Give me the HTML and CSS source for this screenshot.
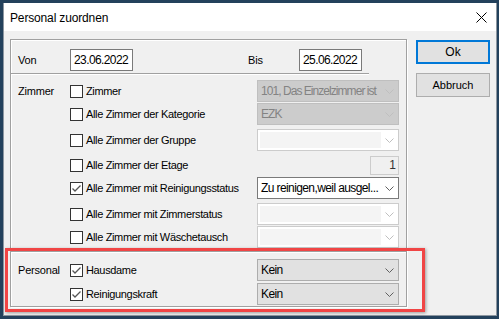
FILE: index.html
```html
<!DOCTYPE html>
<html lang="de">

<head>
    <meta charset="UTF-8">
    <title>Personal zuordnen</title>
    <link rel="stylesheet" href="styles.css">
</head>

<body>
    <div class="window">
        <div class="titlebar">
            <span class="title">Personal zuordnen</span>
            <svg class="close" width="11" height="11" viewBox="0 0 11 11">
                <path d="M0.5 0.5 L10.5 10.5 M10.5 0.5 L0.5 10.5" stroke="#000" stroke-width="1" fill="none" />
            </svg>
        </div>

        <div class="client">
            <div class="group">
                <div class="dates">
                    <span class="lbl">Von</span>
                    <div class="cell"><div class="datebox">23.06.2022</div></div>
                    <span class="lbl">Bis</span>
                    <div class="datebox">25.06.2022</div>
                </div>
                <div class="sep short"></div>

                <div class="rows zimmer">
                    <span class="lbl">Zimmer</span>
                    <label class="check"><span class="box"></span>Zimmer</label>
                    <div class="combo off"><span class="combo-text">101, Das Einzelzimmer ist</span><span class="arrow"><svg width="9" height="5" viewBox="0 0 9 5"><path d="M0.5 0.5 L4.5 4.5 L8.5 0.5" /></svg></span></div>

                    <span></span>
                    <label class="check"><span class="box"></span>Alle Zimmer der Kategorie</label>
                    <div class="combo off"><span class="combo-text">EZK</span><span class="arrow"><svg width="9" height="5" viewBox="0 0 9 5"><path d="M0.5 0.5 L4.5 4.5 L8.5 0.5" /></svg></span></div>

                    <span></span>
                    <label class="check"><span class="box"></span>Alle Zimmer der Gruppe</label>
                    <div class="combo empty"><span class="combo-text"></span><span class="arrow"><svg width="9" height="5" viewBox="0 0 9 5"><path d="M0.5 0.5 L4.5 4.5 L8.5 0.5" /></svg></span></div>

                    <span></span>
                    <label class="check"><span class="box"></span>Alle Zimmer der Etage</label>
                    <div class="spin-cell"><div class="spin">1</div></div>

                    <span></span>
                    <label class="check"><span class="box checked"><svg width="11" height="11" viewBox="0 0 11 11"><path d="M1.5 5.5 L4 8 L9.5 2.5" /></svg></span>Alle Zimmer mit Reinigungsstatus</label>
                    <div class="combo active"><span class="combo-text">Zu reinigen,weil ausgel...</span><span class="arrow"><svg width="9" height="5" viewBox="0 0 9 5"><path d="M0.5 0.5 L4.5 4.5 L8.5 0.5" /></svg></span></div>

                    <span></span>
                    <label class="check"><span class="box"></span>Alle Zimmer mit Zimmerstatus</label>
                    <div class="combo empty"><span class="combo-text"></span><span class="arrow"><svg width="9" height="5" viewBox="0 0 9 5"><path d="M0.5 0.5 L4.5 4.5 L8.5 0.5" /></svg></span></div>

                    <span></span>
                    <label class="check"><span class="box"></span>Alle Zimmer mit Wäschetausch</label>
                    <div class="combo empty"><span class="combo-text"></span><span class="arrow"><svg width="9" height="5" viewBox="0 0 9 5"><path d="M0.5 0.5 L4.5 4.5 L8.5 0.5" /></svg></span></div>
                </div>
                <div class="sep"></div>

                <div class="rows personal">
                    <span class="lbl">Personal</span>
                    <label class="check"><span class="box checked"><svg width="11" height="11" viewBox="0 0 11 11"><path d="M1.5 5.5 L4 8 L9.5 2.5" /></svg></span>Hausdame</label>
                    <div class="combo list"><span class="combo-text">Kein</span><span class="arrow"><svg width="9" height="5" viewBox="0 0 9 5"><path d="M0.5 0.5 L4.5 4.5 L8.5 0.5" /></svg></span></div>

                    <span></span>
                    <label class="check"><span class="box checked"><svg width="11" height="11" viewBox="0 0 11 11"><path d="M1.5 5.5 L4 8 L9.5 2.5" /></svg></span>Reinigungskraft</label>
                    <div class="combo list"><span class="combo-text">Kein</span><span class="arrow"><svg width="9" height="5" viewBox="0 0 9 5"><path d="M0.5 0.5 L4.5 4.5 L8.5 0.5" /></svg></span></div>
                </div>
            </div>

            <div class="buttons">
                <button class="btn default">Ok</button>
                <button class="btn">Abbruch</button>
            </div>
        </div>

        <div class="highlight"></div>
    </div>
</body>

</html>
```

FILE: styles.css
```css
body {
    margin: 0;
    background-color: #23415c;
    font-family: "Liberation Sans", Arial, sans-serif;
    font-size: 11px;
    color: #000;
}

.window {
    position: relative;
    margin: 3px 0 0 3px;
    width: 492px;
    height: 312px;
    border: 1px solid #8c96a0;
    border-top: none;
    background-color: #f0f0f0;
}

.titlebar {
    height: 28px;
    background-color: #fff;
    display: flex;
    align-items: center;
    justify-content: space-between;
    padding: 0 9px 0 6px;
}

.title {
    font-size: 12px;
    letter-spacing: -0.15px;
    padding-top: 1px;
}

.close {
    display: block;
}

.client {
    display: flex;
    align-items: flex-start;
    padding: 8px 0 0 6px;
    gap: 9px;
}

/* etched group frame */
.group {
    width: 395px;
    height: 266px;
    border: 1px solid #a0a0a0;
    box-shadow: inset 1px 1px #fff, 1px 1px #fff;
}

.sep {
    border-top: 1px solid #a0a0a0;
    border-bottom: 1px solid #fff;
}

.sep.short {
    width: 358px;
}

.lbl {
    padding-left: 1px;
    letter-spacing: -0.2px;
}

.dates {
    height: 26px;
    padding: 7px 0 0 6px;
    display: grid;
    grid-template-columns: 53px 177px 52px 63px;
    align-items: center;
}

.datebox {
    box-sizing: border-box;
    width: 63px;
    height: 22px;
    line-height: 20px;
    border: 1px solid #7a7a7a;
    background-color: #fff;
    padding-left: 3px;
    font-size: 12px;
    letter-spacing: -0.6px;
}

.rows {
    display: grid;
    grid-template-columns: 53px 187px 142px;
    padding-left: 6px;
}

.zimmer {
    padding-top: 5px;
    padding-bottom: 3px;
    grid-template-rows: 23px 26px 25px 23px 26px 23px 22px;
}

.personal {
    padding-top: 6px;
    padding-bottom: 1px;
    grid-template-rows: 24px 22px;
}

.rows .lbl {
    height: 22px;
    line-height: 22px;
}

.check {
    display: flex;
    align-items: center;
    height: 22px;
    letter-spacing: -0.35px;
    white-space: nowrap;
}

.box {
    width: 11px;
    height: 11px;
    border: 1px solid #333;
    background-color: #fff;
    margin-right: 3px;
    flex-shrink: 0;
}

.box svg {
    display: block;
}

.box path {
    fill: none;
    stroke: #555;
    stroke-width: 1.3;
}

.combo {
    display: flex;
    height: 20px;
    border: 1px solid #adadad;
    background-color: #e1e1e1;
}

.combo-text {
    flex: 1;
    line-height: 20px;
    padding-left: 3px;
    font-size: 12px;
    letter-spacing: -0.6px;
    white-space: nowrap;
    overflow: hidden;
}

.arrow {
    width: 17px;
    display: flex;
    align-items: center;
    justify-content: center;
}

.arrow svg {
    display: block;
}

.arrow path {
    fill: none;
    stroke: #606060;
    stroke-width: 1;
}

.combo.off {
    background-color: #cccccc;
    border-color: #bfbfbf;
    color: #838383;
}

.combo.off .combo-text {
    letter-spacing: -0.95px;
}

.combo.off .arrow path,
.combo.empty .arrow path {
    stroke: #bfbfbf;
}

.combo.empty {
    border-color: #cccccc;
    background-color: #fff;
}

.combo.empty .combo-text {
    margin: 2px 0 2px 2px;
    background-color: #f4f4f4;
}

.combo.active {
    border-color: #7a7a7a;
    background-color: #fff;
}

.spin-cell {
    display: flex;
    justify-content: flex-end;
    padding-top: 2px;
}

.spin {
    width: 25px;
    height: 17px;
    line-height: 17px;
    border: 1px solid #cccccc;
    text-align: right;
    padding-right: 2px;
    font-size: 12px;
    color: #333;
}

.buttons {
    display: flex;
    flex-direction: column;
    gap: 9px;
    padding-top: 1px;
}

.btn {
    width: 74px;
    height: 24px;
    border: 1px solid #adadad;
    background-color: #e1e1e1;
    font-family: "Liberation Sans", Arial, sans-serif;
    font-size: 11px;
    color: #000;
    padding: 0;
}

.btn.default {
    border: 2px solid #0078d7;
    font-size: 12px;
}

.highlight {
    position: absolute;
    left: 1px;
    top: 245px;
    width: 414px;
    height: 58px;
    border: 3px solid #f04545;
    box-shadow: 1px 1px 3px rgba(0, 0, 0, 0.35);
    pointer-events: none;
}
```
